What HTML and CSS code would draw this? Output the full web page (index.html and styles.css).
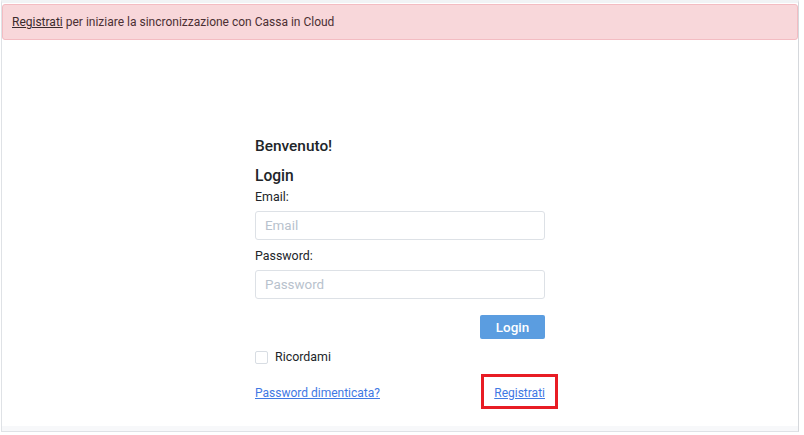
FILE: index.html
```html
<!DOCTYPE html>
<html lang="it">
<head>
<meta charset="utf-8">
<title>Login</title>
<link rel="stylesheet" href="styles.css">
</head>
<body>
<div class="frame">
  <div class="alert"><a href="#" class="alert-link">Registrati</a> per iniziare la sincronizzazione con Cassa in Cloud</div>
  <main class="main">
    <form class="login">
      <h2 class="welcome">Benvenuto!</h2>
      <h3 class="title">Login</h3>
      <label class="label" for="email">Email:</label>
      <input class="input" id="email" type="text" placeholder="Email">
      <label class="label label-pw" for="pw">Password:</label>
      <input class="input" id="pw" type="password" placeholder="Password">
      <div class="actions"><button type="button" class="btn">Login</button></div>
      <label class="remember"><span class="check"></span><span>Ricordami</span></label>
      <div class="links">
        <a href="#" class="link">Password dimenticata?</a>
        <span class="reg-wrap"><a href="#" class="link">Registrati</a><span class="highlight"></span></span>
      </div>
    </form>
  </main>
  <div class="footer-band"></div>
</div>
</body>
</html>
```
FILE: styles.css
```css
* { box-sizing: border-box; }
html, body { margin: 0; padding: 0; background: #ffffff; }
body {
  font-family: Roboto, "Noto Sans", "Liberation Sans", sans-serif;
  color: #212529;
  width: 804px;
  height: 435px;
  overflow: hidden;
}
.frame {
  margin-left: 1px;
  width: 798px;
  height: 432px;
  border-left: 1px solid #dfe2e6;
  border-right: 1px solid #d5d8dc;
  border-bottom: 1px solid #dfe2e6;
  border-top: 3px solid #f1f3f5;
  display: flex;
  flex-direction: column;
}
.alert {
  margin: 1px 0 0 0;
  height: 36px;
  padding: 0 9px;
  display: flex;
  align-items: center;
  background: #f8d7da;
  border: 1px solid #f3bcc2;
  border-radius: 3px;
  font-size: 12px;
  color: #4b2f33;
}
.alert-link { color: #3b2b2d; text-decoration: underline; margin-right: 3px; }
.main { flex: 1; padding-top: 97px; }
.login { width: 290px; margin: 0 auto; display: flex; flex-direction: column; }
.welcome { margin: 0; font-size: 15.4px; font-weight: 500; line-height: 19px; color: #212529; }
.title { margin: 11px 0 0 0; font-size: 15.6px; font-weight: 500; line-height: 19px; color: #212529; }
.label { font-size: 12.4px; line-height: 19px; margin-top: 1px; color: #212529; }
.label-pw { margin-top: 6px; }
.input {
  margin-top: 5px;
  height: 29px;
  width: 290px;
  border: 1px solid #dde1e6;
  border-radius: 3px;
  padding: 0 9px;
  font-family: inherit;
  font-size: 13.4px;
  color: #212529;
  outline: none;
}
.input::placeholder { color: #b8c2cd; }
.actions { display: flex; justify-content: flex-end; margin-top: 16px; }
.btn {
  width: 65px;
  height: 24px;
  border: none;
  border-radius: 2px;
  background: #5b9de0;
  color: #ffffff;
  font-family: inherit;
  font-size: 13.4px;
  font-weight: 500;
  padding: 0;
}
.remember { display: flex; align-items: center; margin-top: 9px; font-size: 12.4px; line-height: 18px; color: #212529; }
.check {
  width: 13px;
  height: 13px;
  border: 1px solid #d8dde3;
  border-radius: 2px;
  margin-right: 7px;
  background: #fff;
}
.links {
  display: flex;
  justify-content: space-between;
  align-items: center;
  margin-top: 18px;
  font-size: 12px;
  line-height: 18px;
}
.link { color: #3f79e4; text-decoration: underline; }
.reg-wrap { position: relative; }
.highlight {
  position: absolute;
  left: -13px;
  top: -10px;
  width: 77px;
  height: 35px;
  border: 3px solid #e81c24;
}
.footer-band { height: 5px; background: #f7f8fa; }
```
